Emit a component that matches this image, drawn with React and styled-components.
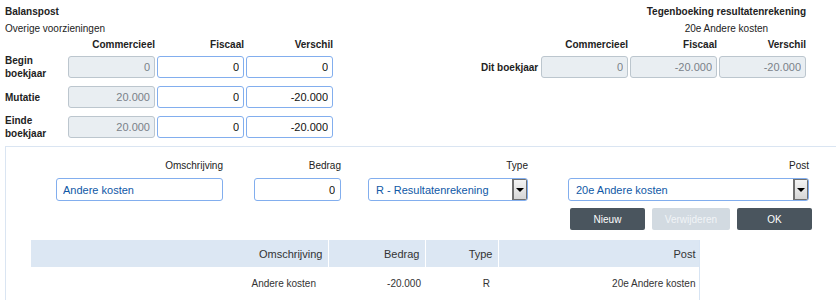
import React from 'react';
import styled, { createGlobalStyle } from 'styled-components';

const GlobalStyle = createGlobalStyle`
  body {
    margin: 0;
    font-family: "Liberation Sans", Arial, sans-serif;
    font-size: 10px;
    color: #222;
    background: #fff;
  }
`;

const Page = styled.div`
  width: 836px;
  height: 300px;
  overflow: hidden;
`;

const Top = styled.div`
  display: flex;
  justify-content: space-between;
  padding: 5px 30px 0 5px;
`;

const Block = styled.div`
  display: flex;
  flex-direction: column;
  align-items: ${(p) => (p.$right ? 'flex-end' : 'flex-start')};
`;

const HeadGroup = styled.div`
  display: flex;
  flex-direction: column;
  align-items: ${(p) => (p.$center ? 'center' : 'flex-start')};
`;

const Title = styled.div`
  font-weight: bold;
  line-height: 14px;
`;

const Sub = styled.div`
  line-height: 14px;
  margin-top: 3px;
`;

const Grid = styled.div`
  display: grid;
  grid-template-columns: ${(p) => p.$label}px repeat(3, 87px);
  grid-auto-rows: ${(p) => p.$row || 22}px;
  column-gap: 2px;
  row-gap: 8px;
  align-items: center;
  margin-top: ${(p) => p.$top || 0}px;
`;

const ColHead = styled.div`
  font-weight: bold;
  text-align: right;
  line-height: 14px;
`;

const RowLabel = styled.div`
  font-weight: bold;
  line-height: 13px;
  white-space: nowrap;
`;

const NumInput = styled.input`
  box-sizing: border-box;
  width: 100%;
  height: 22px;
  padding: 0 4px;
  font-family: inherit;
  font-size: 11px;
  text-align: right;
  border-radius: 3px;
  outline: none;
  border: 1px solid ${(p) => (p.$locked ? '#bcc6ce' : '#82aeee')};
  background: ${(p) => (p.$locked ? '#e9eef2' : '#fff')};
  color: ${(p) => (p.$locked ? '#7a8189' : '#111')};
`;

const Panel = styled.div`
  margin: 8px 0 0 5px;
  border-top: 1px solid #dae5f2;
  border-left: 1px solid #dae5f2;
  padding-top: 12px;
  height: 200px;
`;

const FormArea = styled.div`
  padding-left: 50px;
`;

const FormRow = styled.div`
  display: flex;
`;

const Field = styled.div`
  width: ${(p) => p.$w}px;
  margin-left: ${(p) => p.$ml || 0}px;
  display: flex;
  flex-direction: column;
`;

const FieldLabel = styled.div`
  text-align: right;
  line-height: 14px;
  margin-bottom: 5px;
`;

const TextInput = styled.input`
  box-sizing: border-box;
  width: 100%;
  height: 23px;
  padding: 0 ${(p) => (p.$num ? 5 : 6)}px;
  font-family: inherit;
  font-size: 11px;
  text-align: ${(p) => (p.$num ? 'right' : 'left')};
  color: ${(p) => (p.$num ? '#111' : '#0f58a6')};
  border: 1px solid #82aeee;
  border-radius: 3px;
  outline: none;
  background: #fff;
`;

const SelectBox = styled.div`
  box-sizing: border-box;
  height: 23px;
  display: flex;
  align-items: stretch;
  border: 1px solid #82aeee;
  border-radius: 3px;
  background: #fff;
  overflow: hidden;
`;

const SelectValue = styled.div`
  flex: 1;
  display: flex;
  align-items: center;
  padding-left: 7px;
  font-size: 11px;
  color: #0f58a6;
`;

const ArrowBox = styled.div`
  width: 12px;
  margin: -1px -1px -1px 0;
  border: 2px solid #6f6f6f;
  background: linear-gradient(#f4f4f4, #d6d6d6);
  display: flex;
  align-items: center;
  justify-content: center;

  &::after {
    content: '';
    border-left: 4px solid transparent;
    border-right: 4px solid transparent;
    border-top: 4px solid #000;
  }
`;

const Buttons = styled.div`
  width: 756px;
  display: flex;
  justify-content: flex-end;
  gap: 7px;
  margin-top: 7px;
`;

const Button = styled.button`
  width: ${(p) => p.$w}px;
  height: 22px;
  border: none;
  border-radius: 2px;
  font-family: inherit;
  font-size: 10px;
  background: ${(p) => (p.disabled ? '#d2dae1' : '#4a555e')};
  color: ${(p) => (p.disabled ? '#f1f4f7' : '#fff')};
`;

const Table = styled.table`
  margin: 10px 0 0 25px;
  border-collapse: collapse;
  table-layout: fixed;
  width: 668px;
  border-right: 1px solid #d7e4f3;
  font-size: 10px;
`;

const Th = styled.th`
  box-sizing: border-box;
  height: 27px;
  padding: 0 ${(p) => p.$pr || 5}px 0 0;
  background: #dce7f3;
  border-right: 1px solid #fff;
  font-weight: normal;
  font-size: 11px;
  text-align: right;
  color: #333;

  &:last-child {
    border-right: none;
  }
`;

const Td = styled.td`
  height: 33px;
  padding: 0 ${(p) => p.$pr || 5}px 0 0;
  text-align: right;
  color: #333;
`;

const balans = [
  { label: ['Begin', 'boekjaar'], values: ['0', '0', '0'] },
  { label: ['Mutatie'], values: ['20.000', '0', '-20.000'] },
  { label: ['Einde', 'boekjaar'], values: ['20.000', '0', '-20.000'] },
];

const heads = ['Commercieel', 'Fiscaal', 'Verschil'];

function App() {
  return (
    <Page>
      <GlobalStyle />
      <Top>
        <Block>
          <HeadGroup>
            <Title>Balanspost</Title>
            <Sub>Overige voorzieningen</Sub>
          </HeadGroup>
          <Grid $label={61} $row={14} $top={2}>
            <span />
            {heads.map((h) => (
              <ColHead key={h}>{h}</ColHead>
            ))}
          </Grid>
          <Grid $label={61} $top={4}>
            {balans.map((row) => (
              <React.Fragment key={row.label.join()}>
                <RowLabel>
                  {row.label.map((l) => (
                    <div key={l}>{l}</div>
                  ))}
                </RowLabel>
                {row.values.map((v, i) => (
                  <NumInput key={i} $locked={i === 0} value={v} readOnly />
                ))}
              </React.Fragment>
            ))}
          </Grid>
        </Block>

        <Block $right>
          <HeadGroup $center>
            <Title>Tegenboeking resultatenrekening</Title>
            <Sub>20e Andere kosten</Sub>
          </HeadGroup>
          <Grid $label={58} $row={14} $top={2}>
            <span />
            {heads.map((h) => (
              <ColHead key={h}>{h}</ColHead>
            ))}
          </Grid>
          <Grid $label={58} $top={4}>
            <RowLabel>Dit boekjaar</RowLabel>
            <NumInput $locked value="0" readOnly />
            <NumInput $locked value="-20.000" readOnly />
            <NumInput $locked value="-20.000" readOnly />
          </Grid>
        </Block>
      </Top>

      <Panel>
        <FormArea>
          <FormRow>
            <Field $w={167}>
              <FieldLabel>Omschrijving</FieldLabel>
              <TextInput value="Andere kosten" readOnly />
            </Field>
            <Field $w={87} $ml={31}>
              <FieldLabel>Bedrag</FieldLabel>
              <TextInput $num value="0" readOnly />
            </Field>
            <Field $w={160} $ml={27}>
              <FieldLabel>Type</FieldLabel>
              <SelectBox>
                <SelectValue>R - Resultatenrekening</SelectValue>
                <ArrowBox />
              </SelectBox>
            </Field>
            <Field $w={241} $ml={40}>
              <FieldLabel>Post</FieldLabel>
              <SelectBox>
                <SelectValue>20e Andere kosten</SelectValue>
                <ArrowBox />
              </SelectBox>
            </Field>
          </FormRow>
          <Buttons>
            <Button $w={75}>Nieuw</Button>
            <Button $w={78} disabled>
              Verwijderen
            </Button>
            <Button $w={75}>OK</Button>
          </Buttons>
        </FormArea>

        <Table>
          <colgroup>
            <col style={{ width: 297 }} />
            <col style={{ width: 97 }} />
            <col style={{ width: 73 }} />
            <col style={{ width: 201 }} />
          </colgroup>
          <thead>
            <tr>
              <Th>Omschrijving</Th>
              <Th>Bedrag</Th>
              <Th>Type</Th>
              <Th $pr={3}>Post</Th>
            </tr>
          </thead>
          <tbody>
            <tr>
              <Td $pr={12}>Andere kosten</Td>
              <Td $pr={4}>-20.000</Td>
              <Td $pr={8}>R</Td>
              <Td $pr={3}>20e Andere kosten</Td>
            </tr>
          </tbody>
        </Table>
      </Panel>
    </Page>
  );
}

export default App;
